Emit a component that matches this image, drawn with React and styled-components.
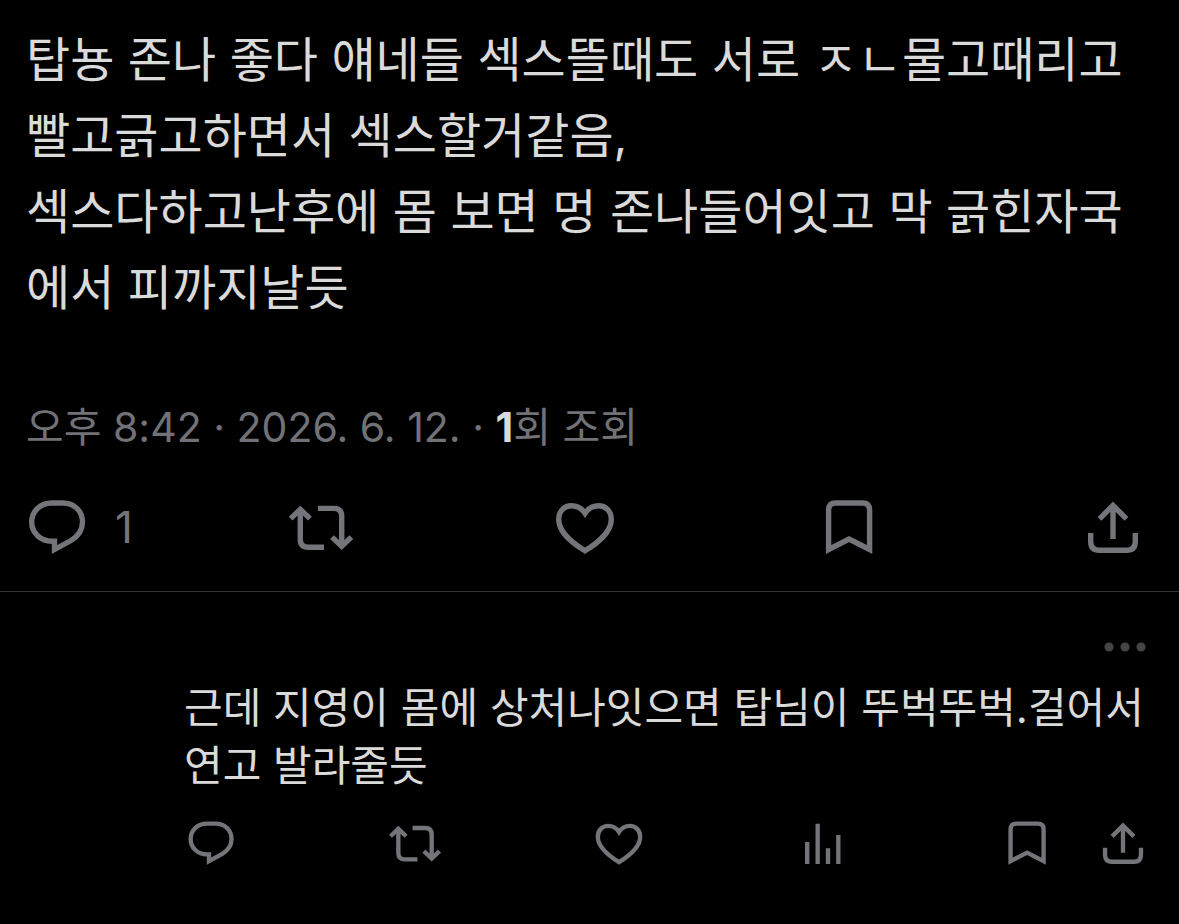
import React from "react";
import styled, { createGlobalStyle } from "styled-components";

const GlobalStyle = createGlobalStyle`
  * { box-sizing: border-box; }
  body {
    margin: 0;
    background: #000;
    color: #dadada;
    font-family: Inter, "Noto Sans CJK KR", sans-serif;
  }
`;

const Page = styled.main`
  min-height: 100vh;
  background: #000;
`;

const Post = styled.article`
  padding: 22px 0 28px;
  border-bottom: 1px solid #2f3134;
`;

const PostText = styled.p`
  margin: 0;
  padding: 0 26px;
  font-size: 48px;
  line-height: 76px;
  white-space: nowrap;
`;

const Meta = styled.p`
  margin: 76px 0 0;
  padding: 0 26px;
  font-size: 41px;
  line-height: 50px;
  color: #717277;
  white-space: nowrap;
`;

const Views = styled.strong`
  font-weight: 700;
  color: #dadada;
`;

const Actions = styled.div`
  display: grid;
  align-items: center;
  justify-items: start;
  grid-template-columns: ${(p) =>
    p.$compact ? "repeat(4, 1fr) 96px 58px" : "repeat(4, 1fr) 72px"};
  margin-top: ${(p) => (p.$compact ? "19px" : "39px")};
  padding: ${(p) => (p.$compact ? "0 27px 0 0" : "0 30px 0 21px")};
`;

const IconButton = styled.button`
  display: flex;
  align-items: center;
  gap: 22px;
  padding: 0;
  border: 0;
  background: none;
  color: ${(p) => (p.$dim ? "#434447" : "#74757a")};
  font: inherit;
  font-size: 44px;
  line-height: 50px;
  cursor: pointer;
`;

const Drawing = styled.svg`
  display: block;
  width: ${(p) => p.$size}px;
  height: ${(p) => p.$size}px;
  fill: none;
  stroke: currentColor;
  stroke-width: 5.4;
`;

const Reply = styled.article`
  padding: 26px 0 0 182px;
`;

const ReplyHeader = styled.header`
  display: flex;
  justify-content: flex-end;
  padding-right: 25px;
`;

const ReplyText = styled.p`
  margin: 3px 0 0;
  padding-left: 2px;
  font-size: 42px;
  line-height: 58px;
  white-space: nowrap;
`;

const shapes = {
  reply: (
    <path d="M31 12H42C53 12 61.5 20 61.5 31C61.5 39 57.5 45 50 49.5L33.5 58.5V50.2H31C19.5 50.2 10.7 42 10.7 31C10.7 20.5 19 12 31 12Z" />
  ),
  repost: (
    <path d="M5.6 27.6L15.3 18.4L25 27.6M15.3 19V48.3Q15.3 56.3 23.3 56.3H39M33 17.4H48.7Q56.7 17.4 56.7 25.4V55M47 46.1L56.7 55.3L66.4 46.1" />
  ),
  like: (
    <path d="M36 59.8C22 51 9.7 41 9.7 28.5C9.7 20 15.5 14.8 22.5 14.8C28.5 14.8 33 17.8 36 22.3C39 17.8 43.5 14.8 49.5 14.8C56.5 14.8 62.3 20 62.3 28.5C62.3 41 50 51 36 59.8Z" />
  ),
  views: <path d="M16.4 62V34.7M29.4 62V12M42.2 62V42.6M55 62V26" />,
  bookmark: (
    <path d="M15.6 58.5V19Q15.6 12 22.6 12H49.6Q56.6 12 56.6 19V58.5L36.1 48Z" />
  ),
  share: (
    <path d="M13.7 42V50.5Q13.7 59.3 22.5 59.3H49.5Q58.3 59.3 58.3 50.5V42M22.5 27.8L36 14.4L49.5 27.8M36 16V48" />
  ),
};

function Action({ name, label, size, count }) {
  return (
    <IconButton type="button" aria-label={label}>
      <Drawing $size={size} viewBox="0 0 72 72" aria-hidden="true">
        {shapes[name]}
      </Drawing>
      {count !== undefined && <span>{count}</span>}
    </IconButton>
  );
}

export default function App() {
  return (
    <Page lang="ko">
      <GlobalStyle />
      <Post>
        <PostText>
          탑뇽 존나 좋다 얘네들 섹스뜰때도 서로 ㅈㄴ물고때리고
          <br />
          빨고긁고하면서 섹스할거같음,
          <br />
          섹스다하고난후에 몸 보면 멍 존나들어잇고 막 긁힌자국
          <br />
          에서 피까지날듯
        </PostText>
        <Meta>
          오후 8:42 · 2026. 6. 12. · <Views>1</Views>회 조회
        </Meta>
        <Actions>
          <Action name="reply" label="답글" size={72} count={1} />
          <Action name="repost" label="재게시" size={72} />
          <Action name="like" label="마음에 들어요" size={72} />
          <Action name="bookmark" label="북마크" size={72} />
          <Action name="share" label="공유" size={72} />
        </Actions>
      </Post>
      <Reply>
        <ReplyHeader>
          <IconButton type="button" aria-label="더 보기" $dim>
            <Drawing $size={58} viewBox="0 0 58 58" aria-hidden="true">
              <g fill="currentColor" stroke="none">
                <circle cx="13" cy="29" r="4.6" />
                <circle cx="29" cy="29" r="4.6" />
                <circle cx="45" cy="29" r="4.6" />
              </g>
            </Drawing>
          </IconButton>
        </ReplyHeader>
        <ReplyText>
          근데 지영이 몸에 상처나잇으면 탑님이 뚜벅뚜벅.걸어서
          <br />
          연고 발라줄듯
        </ReplyText>
        <Actions $compact>
          <Action name="reply" label="답글" size={58} />
          <Action name="repost" label="재게시" size={58} />
          <Action name="like" label="마음에 들어요" size={58} />
          <Action name="views" label="조회수" size={58} />
          <Action name="bookmark" label="북마크" size={58} />
          <Action name="share" label="공유" size={58} />
        </Actions>
      </Reply>
    </Page>
  );
}
